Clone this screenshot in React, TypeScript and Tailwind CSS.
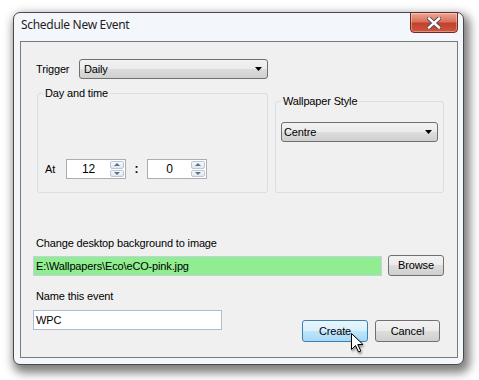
const ui = "font-['Liberation_Sans',Arial,sans-serif] text-[11px] leading-[13px] tracking-[-0.15px] text-black";

function Combo({ value, className }: { value: string; className: string }) {
  return (
    <div
      className={`flex items-center justify-between h-[20px] rounded-[3px] border border-[#707070] bg-[linear-gradient(#f2f2f2_0%,#ebebeb_50%,#dddddd_50%,#cfcfcf_100%)] ${className}`}
    >
      <span>{value}</span>
      <svg width="7" height="4" viewBox="0 0 7 4" className="mr-[5px]">
        <path d="M0 0H7L3.5 4Z" fill="#000" />
      </svg>
    </div>
  );
}

function Spinner({ value }: { value: string }) {
  return (
    <div className="flex h-[20px] w-[60px] border border-[#abadb3] bg-white">
      <div className="flex-1 flex items-center justify-center text-[12px]">{value}</div>
      <div className="flex flex-col w-[15px] gap-[1px] p-[1px] pl-0">
        {["M0 3L3 0L6 3Z", "M0 0H6L3 3Z"].map((d) => (
          <div
            key={d}
            className="flex-1 flex items-center justify-center border border-[#bcc7d5] rounded-[2px] bg-[linear-gradient(#f7f9fc,#dfe6ee)]"
          >
            <svg width="6" height="3" viewBox="0 0 6 3">
              <path d={d} fill="#5b6f93" />
            </svg>
          </div>
        ))}
      </div>
    </div>
  );
}

function Button({ label, hot, className }: { label: string; hot?: boolean; className: string }) {
  return (
    <div
      className={`flex items-center justify-center h-[22px] rounded-[3px] border ${
        hot
          ? "border-[#3c7fb1] bg-[linear-gradient(#eaf6fd_0%,#d9f0fc_50%,#bee6fd_50%,#a7d9f5_100%)]"
          : "border-[#707070] bg-[linear-gradient(#f2f2f2_0%,#ebebeb_50%,#dddddd_50%,#cfcfcf_100%)]"
      } ${className}`}
    >
      {label}
    </div>
  );
}

export default function App() {
  return (
    <div className={`w-[479px] h-[380px] bg-white pt-[12px] pl-[13px] ${ui}`}>
      <div className="relative w-[451px] h-[353px] rounded-[7px] border border-[#4a4a4a] bg-[#f3f6fb] shadow-[3px_5px_10px_3px_rgba(0,0,0,0.5)]">
        {/* title bar */}
        <div className="relative h-[28px]">
          <div className="pl-[7px] pt-[4px] font-['Noto_Sans','Open_Sans',sans-serif] text-[12px] leading-[16px] tracking-[-0.3px] text-[#1e1e1e]">
            Schedule New Event
          </div>
          <div className="absolute top-[-1px] right-[5px] w-[48px] h-[21px] flex items-center justify-center rounded-b-[4px] border border-[#6c2a22] bg-[linear-gradient(#eaa894_0%,#d9715d_45%,#c2412d_55%,#d0563d_100%)] shadow-[inset_0_0_0_1px_rgba(255,255,255,0.35)]">
            <svg width="14" height="12" viewBox="0 0 14 12">
              <path d="M2 1.5L12 10.5M12 1.5L2 10.5" stroke="#4a4a4a" strokeWidth="4.2" strokeLinecap="square" />
              <path d="M2 1.5L12 10.5M12 1.5L2 10.5" stroke="#fff" strokeWidth="2.4" strokeLinecap="square" />
            </svg>
          </div>
        </div>

        {/* client area */}
        <div className="ml-[6px] w-[438px] h-[317px] border border-[#7a7a7a] bg-[#f0f0f0]">
          <div className="mt-[17px] pl-[15px] flex items-center">
            <span className="w-[43px]">Trigger</span>
            <Combo value="Daily" className="w-[189px] pl-[4px]" />
          </div>

          <div className="mt-[8px] pl-[16px] flex items-start">
            <fieldset className="w-[231px] h-[106px] rounded-[3px] border border-[#d5dfe5]">
              <legend className="ml-[5px] px-[2px]">Day and time</legend>
              <div className="mt-[59px] pl-[7px] flex items-center">
                <span className="w-[21px]">At</span>
                <Spinner value="12" />
                <span className="w-[21px] text-center font-bold text-[12px]">:</span>
                <Spinner value="0" />
              </div>
            </fieldset>
            <fieldset className="ml-[7px] mt-[8px] w-[169px] h-[98px] rounded-[3px] border border-[#d5dfe5]">
              <legend className="ml-[5px] px-[2px]">Wallpaper Style</legend>
              <div className="mt-[14px] pl-[5px]">
                <Combo value="Centre" className="w-[157px] pl-[2px]" />
              </div>
            </fieldset>
          </div>

          <div className="mt-[44px] pl-[15px]">Change desktop background to image</div>
          <div className="mt-[5px] ml-[12px] flex items-start">
            <div className="mt-[1px] w-[349px] h-[20px] flex items-center pl-[2px] border border-[#c3d1de] bg-[#90ee90]">
              E:\Wallpapers\Eco\eCO-pink.jpg
            </div>
            <Button label="Browse" className="ml-[6px] w-[56px] !h-[21px]" />
          </div>

          <div className="mt-[14px] pl-[15px]">Name this event</div>
          <div className="mt-[7px] ml-[12px] flex items-start">
            <div className="w-[189px] h-[20px] flex items-center pl-[2px] border border-[#a9bdd6] bg-white">
              WPC
            </div>
            <div className="relative ml-[80px] mt-[10px]">
              <Button label="Create" hot className="w-[66px]" />
              <svg
                width="13"
                height="20"
                viewBox="0 0 13 20"
                className="absolute left-[49px] top-[13px] drop-shadow-[1px_2px_1px_rgba(0,0,0,0.4)]"
              >
                <path d="M0.5 0.5V16.5L4.5 12.5L7.5 19L9.8 18L6.8 11.5H12Z" fill="#fff" stroke="#000" strokeWidth="1" />
              </svg>
            </div>
            <Button label="Cancel" className="ml-[7px] mt-[10px] w-[65px]" />
          </div>
        </div>
      </div>
    </div>
  );
}
